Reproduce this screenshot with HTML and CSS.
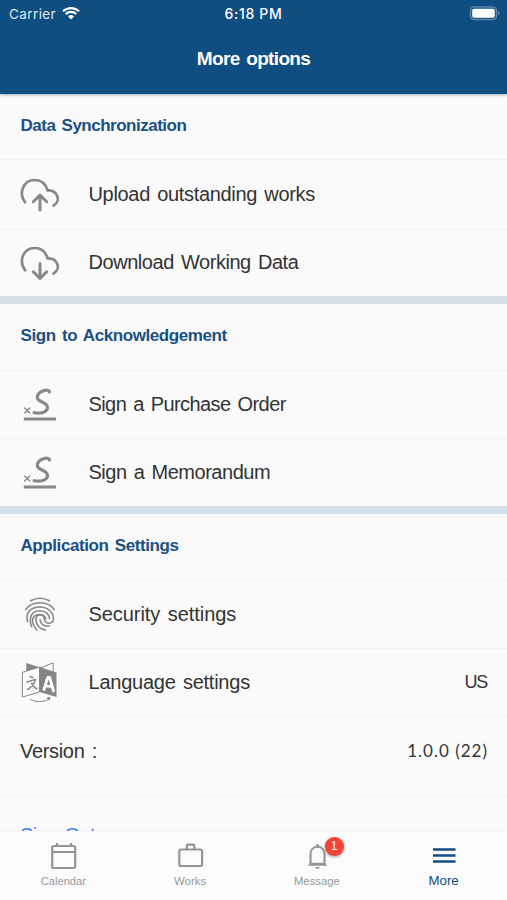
FILE: index.html
```html
<!DOCTYPE html>
<html lang="en">
<head>
<meta charset="utf-8">
<title>More options</title>
<link rel="stylesheet" href="styles.css">
</head>
<body>
<svg class="defs" aria-hidden="true">
  <symbol id="cloud" viewBox="0 0 44 40">
    <path d="M7.200 27.300C.3 18.500 4.800 5.200 16.800 5c6.300 0 11 4.300 12.900 10.500C38.700 14.800 44 25.500 35.600 30.500"/>
  </symbol>
  <symbol id="sign" viewBox="0 0 44 40">
    <path class="pen" d="M31.500 7C31.100 3.300 19.600 5.300 19.300 12.500c-.1 5 10.500 4 10.200 10.200-.2 4.600-7.400 6.300-13.400 5"/>
    <path class="cross" d="m6.700 23 5 5m0-5-5 5"/>
    <path class="rule" d="M5.800 34h32.300"/>
  </symbol>
</svg>
<div class="app">
  <header class="top">
    <div class="status">
      <span class="carrier">Carrier
        <svg class="wifi" viewBox="0 0 18 14"><path d="M1 5.300a11.500 11.500 0 0 1 16 0M3.700 8.100a7.600 7.600 0 0 1 10.600 0"/><path class="dot" d="M6 10.500a4.300 4.300 0 0 1 6 0l-3 3.100z"/></svg>
      </span>
      <span class="time">6:18 PM</span>
      <svg class="battery" viewBox="0 0 31 15"><rect class="case" x="1.500" y="1" width="26" height="12.500" rx="3.500"/><rect class="charge" x="3.200" y="2.700" width="22.600" height="9.100" rx="1.800"/><path class="cap" d="M29 5.300q1.600.7 1.600 2T29 9.300z"/></svg>
    </div>
    <h1>More options</h1>
  </header>

  <main class="list">
    <section>
      <h2 class="data">Data Synchronization</h2>
      <div class="row first"><svg class="icon" viewBox="0 0 44 40"><use href="#cloud"/><path class="arrow" d="M22 35V20m-6.700 6.700 6.700-6.700 6.700 6.700"/></svg><span class="label">Upload outstanding works</span></div>
      <div class="row last"><svg class="icon" viewBox="0 0 44 40"><use href="#cloud"/><path class="arrow" d="M22 20.500v15m-6.700-6.700 6.700 6.700 6.700-6.700"/></svg><span class="label snug">Download Working Data</span></div>
    </section>
    <section>
      <h2>Sign to Acknowledgement</h2>
      <div class="row"><svg class="icon"><use href="#sign"/></svg><span class="label tight">Sign a Purchase Order</span></div>
      <div class="row"><svg class="icon"><use href="#sign"/></svg><span class="label memo">Sign a Memorandum</span></div>
    </section>
    <section>
      <h2 class="settings">Application Settings</h2>
      <div class="row"><svg class="icon finger" viewBox="0 0 44 40">
        <path d="M12.700 5.800c5.800-3.100 12.800-3.100 18.600 0M7.700 14.500c6.500-9 22.100-9 28.600 0"/>
        <path d="M9.500 26.500C7 17.500 13 12 21.800 12c8 0 13.700 5.500 13.700 11.500 0 6.200-9 6.200-9.300.3-.3-5.600-8.400-5.200-8.300.8.100 5.800 4.500 9.900 9.600 10.400"/>
        <path d="M13.600 31.500c-3-7.500-1-15.700 8.200-15.700 5.800 0 9.600 3.700 9.800 8M18.800 35c-7-8-5-15.500 3-15.500 4.200 0 5.300 2 6 4.500M22 24.500c.5 5 4.300 7.200 9.500 6.200"/>
      </svg><span class="label wide">Security settings</span></div>
      <div class="row"><svg class="icon language" viewBox="0 0 44 40">
        <path class="fill" d="M8.300 0 21 4.200v4L8.300 11z"/><path class="edge" d="M21 5.500 35.200-.2V9"/>
        <path class="paper" d="M4.700 9.300 21.500 4v25L4.700 34z"/><path class="fill" d="m21.500 4 17 5.500V34l-17-5z"/>
        <path class="mark" d="m12 13.500 3 1.200M9 19l8.500-2.600c-1 4.300-4 7.800-8 10.100m4.300-6.300c1 2.800 2.500 4.600 5 5.500"/>
        <path class="letter" d="m26 26.500 3.700-12h2l3.800 13.500m-8-5.200 6 .8"/>
        <path class="edge" d="M12.500 36.500c5 3 13.500 2.800 18.500-.5"/><path class="fill" d="m28.500 34.500 4-.5-1 3.800z"/>
      </svg><span class="label language-label">Language settings</span><span class="value country">US</span></div>
      <div class="row version"><span class="label">Version :</span><span class="value number">1.0.0 (22)</span></div>
      <div class="row signout">Sign Out</div>
    </section>
  </main>

  <nav class="tabs">
    <a class="tab"><svg class="glyph" viewBox="0 0 30 30"><path d="M6.200 5h19.500a1.500 1.500 0 0 1 1.500 1.500v19a1.500 1.500 0 0 1-1.500 1.500H5.700a1.500 1.500 0 0 1-1.500-1.500v-19A1.500 1.500 0 0 1 5.700 5zM4.500 11h22.500M9 2v3m14-3v3"/></svg><span>Calendar</span></a>
    <a class="tab"><svg class="glyph" viewBox="0 0 30 30"><rect x="4.300" y="8.500" width="22.800" height="16.500" rx="1.800"/><path d="M11.800 8V4.700q0-1 1-1h5.500q1 0 1 1V8"/></svg><span class="works">Works</span></a>
    <a class="tab"><svg class="glyph bell" viewBox="0 0 30 30"><path d="M8.500 23V13.500c0-4.500 2.800-7.800 7-7.800s7 3.300 7 7.800V23"/><path class="solid" d="M14 6.500V4.500a1.500 1.500 0 0 1 3 0v2zM5.500 24.700l3-3h14l3 3zM13.200 26h4.600q-.5 2-2.300 2t-2.300-2z"/></svg><b class="badge">1</b><span class="message">Message</span></a>
    <a class="tab active"><svg class="glyph" viewBox="0 0 30 30"><path d="M4 8.500h22.500M4 14.500h22.500M4 20.500h22.500"/></svg><span>More</span></a>
  </nav>
</div>
</body>
</html>
```
FILE: styles.css
```css
* { box-sizing: border-box; }
body { margin: 0; background: #fafafa; color: #333; font-family: "Liberation Sans", Arial, sans-serif; }
svg { display: block; fill: none; flex: none; }
.defs { position: absolute; width: 0; height: 0; }
.app { display: flex; flex-direction: column; height: 900px; overflow: hidden; }
.top { height: 94px; flex: none; background: #104d80; color: #fff; box-shadow: 0 1px 3px #0005; z-index: 1; }
.status { height: 28px; display: grid; grid-template-columns: 1fr auto 1fr; align-items: center; padding: 0 7px 0 9px; font: 500 13.500px/28px Inter, sans-serif; }
.carrier { display: flex; align-items: center; gap: 6px; font-weight: 400; letter-spacing: .4px; color: #dce6ee; }
.wifi { width: 18px; height: 14px; margin-top: -2px; stroke: #fff; stroke-width: 2.200; }
.wifi .dot { fill: #fff; stroke: none; }
.time { font-size: 14px; letter-spacing: .7px; margin-right: 2px; }
.battery { width: 31px; height: 15px; justify-self: end; margin-top: -1px; }
.case { stroke: #5d86a9; stroke-width: 1.500; }
.charge { fill: #fff; }
.cap { fill: #5d86a9; }
h1 { margin: 0; text-align: center; font-size: 19px; line-height: 62px; letter-spacing: -.65px; word-spacing: 2px; }
.list { flex: 1; min-height: 0; overflow: hidden; }
section + section { border-top: 8px solid #d4dfe5; }
h2 { margin: 0; height: 65px; padding-left: 20.500px; color: #1a5083; font-size: 17px; line-height: 64px; letter-spacing: -.42px; word-spacing: 2px; }
.data { letter-spacing: -.5px; }
.settings { letter-spacing: -.42px; }
.row { height: 68px; display: flex; align-items: center; padding: 0 20px 0 18px; border-top: 1px solid #f0f0f0; font-size: 20px; word-spacing: 2px; }
.row.first { height: 70px; }
.row.last { height: 67px; }
section:nth-child(n+2) h2 { height: 66px; }
.label { margin-left: 26.500px; letter-spacing: -.32px; }
.snug { letter-spacing: -.45px; margin-top: -1px; }
.tight { letter-spacing: -.58px; }
.memo { letter-spacing: -.47px; }
.wide { letter-spacing: -.06px; }
.language-label { letter-spacing: -.24px; }
.value { margin-left: auto; }
.country { font-size: 18px; letter-spacing: -1.200px; margin-top: -1px; }
.number { font: 17px Lato, sans-serif; letter-spacing: 1px; word-spacing: 0; margin-top: -3px; margin-right: -1px; }
.version { height: 79px; padding-bottom: 9px; }
.version .label { margin-left: 2px; }
.signout { height: 80px; padding-left: 20px; color: #3f82f7; letter-spacing: -.6px; }
.icon { width: 44px; height: 40px; stroke: #888; stroke-width: 2.700; stroke-linecap: round; stroke-linejoin: round; }
.arrow { stroke-width: 3; }
.pen { stroke-width: 3.200; }
.cross { stroke-width: 1.400; }
.rule { stroke-linecap: butt; stroke-width: 3; }
.finger { stroke-width: 1.600; }
.language { stroke-width: 1; overflow: visible; }
.language .fill { fill: #858585; stroke: none; }
.language .paper { fill: #fafafa; }
.language .mark { stroke-width: 1.500; }
.language .letter { stroke: #fff; stroke-width: 2.800; }
.tabs { height: 69px; flex: none; display: grid; grid-template-columns: repeat(4, 1fr); background: #fbfbfb; box-shadow: 0 -1px 2px #0000000a; z-index: 1; color: #999; }
.tab { position: relative; display: flex; flex-direction: column; align-items: center; padding-top: 10px; font-size: 11.100px; line-height: 14px; }
.glyph { width: 30px; height: 30px; stroke: #959595; stroke-width: 2.200; margin-bottom: 3px; }
.works { font-size: 11.500px; }
.message { font-size: 11.300px; }
.bell .solid { fill: #959595; stroke: none; }
.active { color: #104d80; font-size: 13.300px; }
.active .glyph { stroke: #104d80; stroke-width: 2.500; margin-bottom: 3px; }
.badge { position: absolute; left: 71px; top: 6px; width: 19px; height: 19px; border-radius: 50%; background: #f44336; color: #fff; text-align: center; font-weight: 400; font-size: 12px; line-height: 19px; box-shadow: 0 1px 3px #0006; }
```
